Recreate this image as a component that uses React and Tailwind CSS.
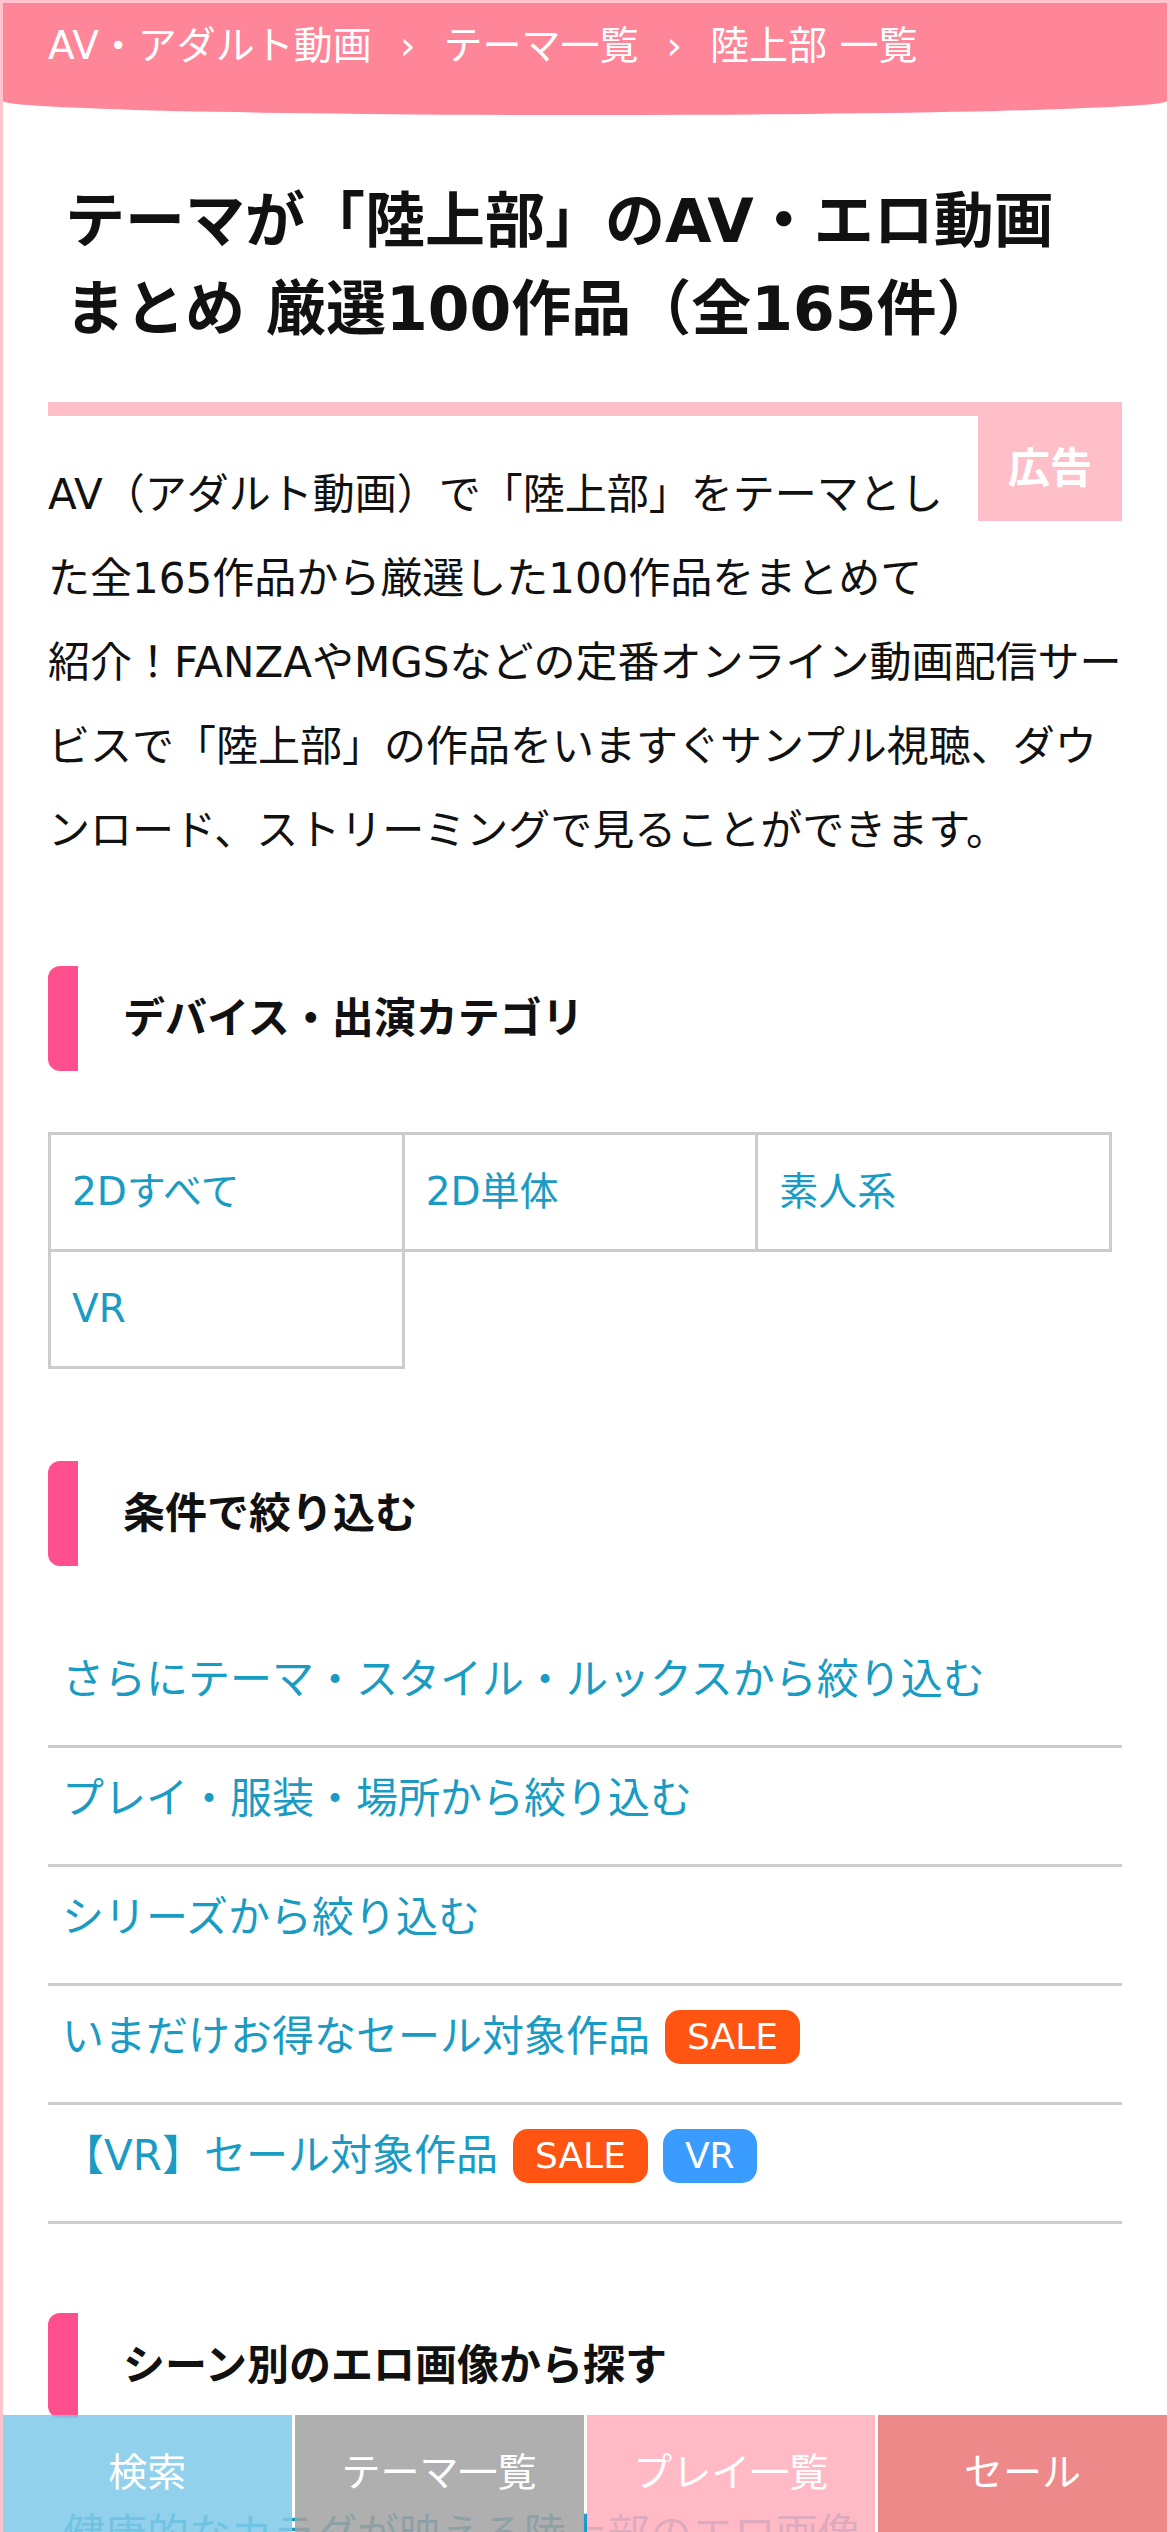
const LINK = "text-[#1a9bc3]";

function Heading({ children }) {
  return (
    <h2 className="flex h-[105px] items-center rounded-l-[12px] border-l-[30px] border-[#ff4f8c] pl-[45px] text-[42px] font-bold leading-[63px]">
      {children}
    </h2>
  );
}

function Badge({ color, children }) {
  return (
    <span className={`inline-flex h-[54px] items-center rounded-[15px] px-[22px] text-[36px] leading-none text-white ${color}`}>
      {children}
    </span>
  );
}

const categories = ["2Dすべて", "2D単体", "素人系", "VR"];

const filters = [
  { label: "さらにテーマ・スタイル・ルックスから絞り込む" },
  { label: "プレイ・服装・場所から絞り込む" },
  { label: "シリーズから絞り込む" },
  { label: "いまだけお得なセール対象作品", sale: true },
  { label: "【VR】セール対象作品", sale: true, vr: true },
];

const navItems = [
  { label: "検索", bg: "bg-[#80cae9]" },
  { label: "テーマ一覧", bg: "bg-[#a2a2a2]" },
  { label: "プレイ一覧", bg: "bg-[#ffaebc]" },
  { label: "セール", bg: "bg-[#eb7575]" },
];

export default function App() {
  return (
    <div className="relative h-[2532px] w-[1170px] overflow-hidden border-x-[3px] border-t-[3px] border-[#ffc4cd] bg-white font-['DejaVu_Sans','Noto_Sans_CJK_JP',sans-serif] text-[#111]">
      {/* breadcrumb */}
      <header className="h-[112px] rounded-b-[50%_14px] bg-[#ff8598] pl-[45px] pt-[14px] text-[39px] leading-[58px] text-white">
        <span>AV・アダルト動画</span>
        <span className="px-[28px]">›</span>
        <span>テーマ一覧</span>
        <span className="px-[28px]">›</span>
        <span>陸上部 一覧</span>
      </header>

      <main className="px-[45px]">
        <h1 className="mt-[62px] pl-[17px] text-[60px] font-bold leading-[88px]">
          テーマが「陸上部」のAV・エロ動画
          <br />
          まとめ 厳選100作品（全165件）
        </h1>

        <div className="mt-[49px] border-t-[14px] border-[#ffbfc9]">
          <span className="float-right bg-[#ffbfc9] px-[30px] py-[21px] text-[42px] font-bold leading-[63px] text-white">
            広告
          </span>
          <p className="pt-[37px] text-[42px] leading-[84px]">
            AV（アダルト動画）で「陸上部」をテーマとした全165作品から厳選した100作品をまとめて
            <br />
            紹介！FANZAやMGSなどの定番オンライン動画配信サービスで「陸上部」の作品をいますぐサンプル視聴、ダウンロード、ストリーミングで見ることができます。
          </p>
        </div>

        {/* device / cast */}
        <section className="mt-[93px]">
          <Heading>デバイス・出演カテゴリ</Heading>
          <div className="mt-[61px] grid w-[1064px] grid-cols-3 border-l-[3px] border-t-[3px] border-[#cccccc]">
            {categories.map((c) => (
              <a
                key={c}
                className={`flex h-[117px] items-center border-b-[3px] border-r-[3px] border-[#cccccc] px-[21px] text-[39px] ${LINK}`}
              >
                {c}
              </a>
            ))}
          </div>
        </section>

        {/* filters */}
        <section className="mt-[92px]">
          <Heading>条件で絞り込む</Heading>
          <ul className="mt-[63px]">
            {filters.map((f) => (
              <li
                key={f.label}
                className={`flex items-center gap-[15px] border-b-[3px] border-[#cccccc] pb-[23px] pl-[14px] pt-[9px] text-[42px] leading-[84px] ${LINK}`}
              >
                <span>{f.label}</span>
                {f.sale && <Badge color="bg-[#ff5412]">SALE</Badge>}
                {f.vr && <Badge color="bg-[#3a9cff]">VR</Badge>}
              </li>
            ))}
          </ul>
        </section>

        {/* scenes */}
        <section className="mt-[89px]">
          <Heading>シーン別のエロ画像から探す</Heading>
          <a className={`mt-[62px] block pl-[15px] pt-[13px] text-[42px] leading-[84px] ${LINK}`}>
            健康的なカラダが映える陸上部のエロ画像
          </a>
        </section>
      </main>

      {/* bottom nav */}
      <nav className="absolute inset-x-0 bottom-0 grid h-[117px] grid-cols-4 gap-[3px] opacity-[0.85]">
        {navItems.map((n) => (
          <a key={n.label} className={`flex items-center justify-center text-[39px] text-white ${n.bg}`}>
            {n.label}
          </a>
        ))}
      </nav>
    </div>
  );
}
